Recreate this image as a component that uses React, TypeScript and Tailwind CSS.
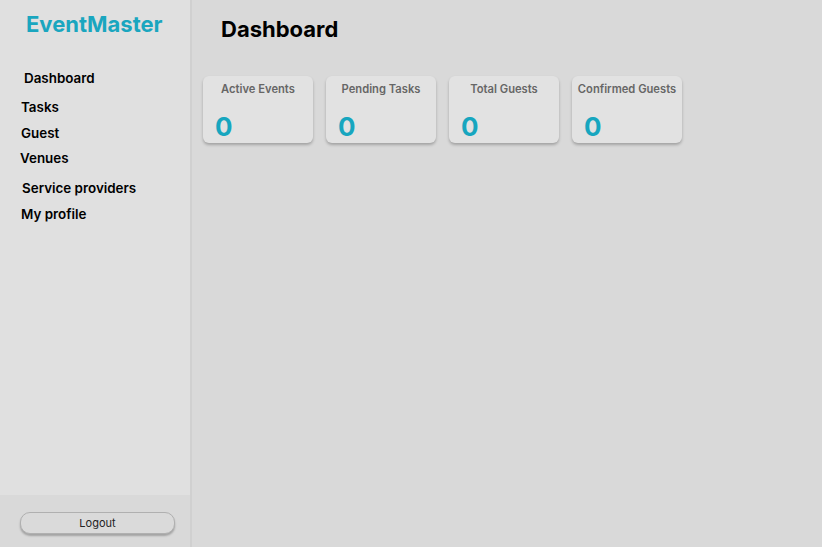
const navItems = [
  { label: 'Dashboard', cls: 'pl-6' },
  { label: 'Tasks', cls: 'pl-[21px] mt-[3px]' },
  { label: 'Guest', cls: 'pl-[21px]' },
  { label: 'Venues', cls: 'pl-5 -mt-px' },
  { label: 'Service providers', cls: 'pl-[22px] mt-1' },
  { label: 'My profile', cls: 'pl-[21px]' },
]

const stats = [
  { label: 'Active Events', value: 0 },
  { label: 'Pending Tasks', value: 0 },
  { label: 'Total Guests', value: 0 },
  { label: 'Confirmed Guests', value: 0 },
]

function StatCard({ label, value }: { label: string; value: number }) {
  return (
    <div className="flex h-[67px] w-[110px] flex-col rounded-md bg-[#e2e2e2] shadow-[0_2px_3px_rgba(0,0,0,0.25)]">
      <div className="pt-[5px] text-center text-[11.2px] font-semibold text-[#666]">{label}</div>
      <div className="pl-3 pt-[16px] text-[26px] font-bold leading-none text-[#17a6bf]">{value}</div>
    </div>
  )
}

export default function App() {
  return (
    <div className="flex h-[547px] w-[822px] bg-[#d9d9d9] font-['Inter',sans-serif] text-black">
      <aside className="flex w-[192px] flex-col border-r-2 border-[#d0d0d0] bg-[#e0e0e0]">
        <div className="flex-1">
          <h1 className="pl-[26px] pt-[10px] text-[22px] font-bold leading-[28px] text-[#1aa6bf]">
            EventMaster
          </h1>
          <nav className="mt-[27px] flex flex-col">
            {navItems.map((item) => (
              <div
                key={item.label}
                className={`flex h-[26px] items-center text-[13.4px] font-semibold ${item.cls}`}
              >
                {item.label}
              </div>
            ))}
          </nav>
        </div>
        <div className="flex h-[52px] items-start bg-[#d9d9d9] pl-5 pt-[17px]">
          <button className="h-[22px] w-[155px] rounded-[10px] border border-[#b0b0b0] bg-[#dadada] text-[11px] text-[#222] shadow-[0_2px_2px_rgba(0,0,0,0.25)]">
            Logout
          </button>
        </div>
      </aside>
      <main className="flex-1 pl-[11px]">
        <h2 className="pl-[18px] pt-[15px] text-[22px] font-bold leading-[28px]">Dashboard</h2>
        <div className="mt-[33px] flex gap-[13px]">
          {stats.map((s) => (
            <StatCard key={s.label} label={s.label} value={s.value} />
          ))}
        </div>
      </main>
    </div>
  )
}
